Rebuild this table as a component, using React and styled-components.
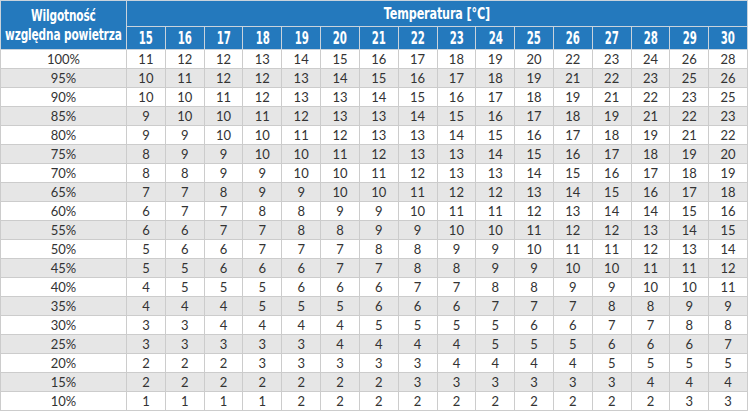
import styled, { createGlobalStyle } from "styled-components";

const GlobalStyle = createGlobalStyle`
  html, body {
    margin: 0;
    padding: 0;
    background: #ffffff;
  }
`;

const temps = [15, 16, 17, 18, 19, 20, 21, 22, 23, 24, 25, 26, 27, 28, 29, 30];

const rows = [
  ["100%", [11, 12, 12, 13, 14, 15, 16, 17, 18, 19, 20, 22, 23, 24, 26, 28]],
  ["95%", [10, 11, 12, 12, 13, 14, 15, 16, 17, 18, 19, 21, 22, 23, 25, 26]],
  ["90%", [10, 10, 11, 12, 13, 13, 14, 15, 16, 17, 18, 19, 21, 22, 23, 25]],
  ["85%", [9, 10, 10, 11, 12, 13, 13, 14, 15, 16, 17, 18, 19, 21, 22, 23]],
  ["80%", [9, 9, 10, 10, 11, 12, 13, 13, 14, 15, 16, 17, 18, 19, 21, 22]],
  ["75%", [8, 9, 9, 10, 10, 11, 12, 13, 13, 14, 15, 16, 17, 18, 19, 20]],
  ["70%", [8, 8, 9, 9, 10, 10, 11, 12, 13, 13, 14, 15, 16, 17, 18, 19]],
  ["65%", [7, 7, 8, 9, 9, 10, 10, 11, 12, 12, 13, 14, 15, 16, 17, 18]],
  ["60%", [6, 7, 7, 8, 8, 9, 9, 10, 11, 11, 12, 13, 14, 14, 15, 16]],
  ["55%", [6, 6, 7, 7, 8, 8, 9, 9, 10, 10, 11, 12, 12, 13, 14, 15]],
  ["50%", [5, 6, 6, 7, 7, 7, 8, 8, 9, 9, 10, 11, 11, 12, 13, 14]],
  ["45%", [5, 5, 6, 6, 6, 7, 7, 8, 8, 9, 9, 10, 10, 11, 11, 12]],
  ["40%", [4, 5, 5, 5, 6, 6, 6, 7, 7, 8, 8, 9, 9, 10, 10, 11]],
  ["35%", [4, 4, 4, 5, 5, 5, 6, 6, 6, 7, 7, 7, 8, 8, 9, 9]],
  ["30%", [3, 3, 4, 4, 4, 4, 5, 5, 5, 5, 6, 6, 7, 7, 8, 8]],
  ["25%", [3, 3, 3, 3, 3, 4, 4, 4, 4, 5, 5, 5, 6, 6, 6, 7]],
  ["20%", [2, 2, 2, 3, 3, 3, 3, 3, 4, 4, 4, 4, 5, 5, 5, 5]],
  ["15%", [2, 2, 2, 2, 2, 2, 2, 3, 3, 3, 3, 3, 3, 4, 4, 4]],
  ["10%", [1, 1, 1, 1, 2, 2, 2, 2, 2, 2, 2, 2, 2, 2, 3, 3]],
];

export default function App() {
  return (
    <>
      <GlobalStyle />
      <Table>
        <colgroup>
          <col style={{ width: 126 }} />
          {temps.map((t) => (
            <col key={t} />
          ))}
        </colgroup>
        <thead>
          <TopRow>
            <HeadCell rowSpan={2}>
              <Squeeze scale={0.66}>
                Wilgotność
                <br />
                względna powietrza
              </Squeeze>
            </HeadCell>
            <HeadCell colSpan={16}>
              <Squeeze>Temperatura [°C]</Squeeze>
            </HeadCell>
          </TopRow>
          <TempRow>
            {temps.map((t) => (
              <NumCell key={t}>
                <Squeeze scale={0.6}>{t}</Squeeze>
              </NumCell>
            ))}
          </TempRow>
        </thead>
        <tbody>
          {rows.map(([label, values], i) => (
            <BodyRow key={label} shaded={i % 2 === 1}>
              <Cell>{label}</Cell>
              {values.map((v, j) => (
                <Cell key={j}>{v}</Cell>
              ))}
            </BodyRow>
          ))}
        </tbody>
      </Table>
    </>
  );
}

const Table = styled.table`
  width: 748px;
  table-layout: fixed;
  border-collapse: collapse;
  font-family: Lato, "Open Sans", "Liberation Sans", sans-serif;
`;

const TopRow = styled.tr`
  height: 26px;
`;

const TempRow = styled.tr`
  height: 23px;
`;

const HeadCell = styled.th`
  padding: 0;
  background: #2479bd;
  color: #ffffff;
  border: 1px solid #c9d3dc;
  font-family: "DejaVu Sans", sans-serif;
  font-weight: 700;
  font-size: 16px;
  line-height: 19px;
  text-align: center;
  vertical-align: middle;
  white-space: nowrap;
`;

const NumCell = styled(HeadCell)`
  font-size: 17px;
`;

const Squeeze = styled.span`
  display: inline-block;
  margin: 0 -40px;
  transform: scaleX(${({ scale }) => scale || 0.7});
  letter-spacing: -0.2px;
`;

const BodyRow = styled.tr`
  height: 19px;
  background: ${({ shaded }) => (shaded ? "#e6e6e6" : "#ffffff")};
`;

const Cell = styled.td`
  padding: 0;
  border: 1px solid #cccccc;
  color: #333333;
  font-size: 13px;
  line-height: 17px;
  text-align: center;
  vertical-align: middle;
`;
